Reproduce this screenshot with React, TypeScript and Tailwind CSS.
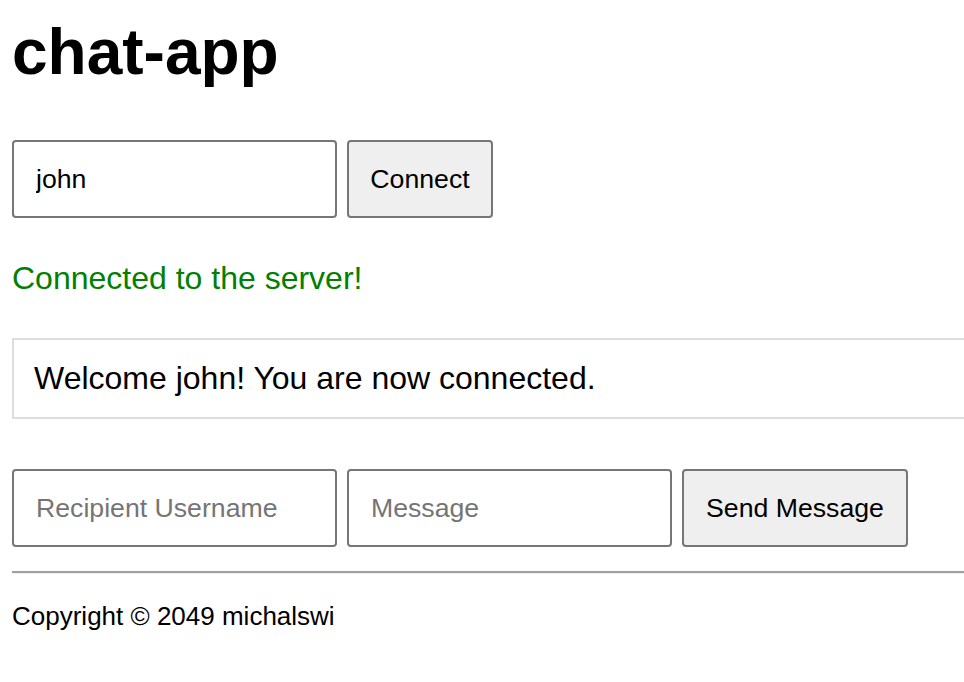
import React, { useState } from "react";

const font = { fontFamily: '"Liberation Sans", Arial, Helvetica, sans-serif' };

const App = () => {
  const [username, setUsername] = useState("john");
  const [recipient, setRecipient] = useState("");
  const [message, setMessage] = useState("");

  return (
    <div className="w-full overflow-hidden bg-white text-black" style={font}>
      <div className="px-[12px] pt-[15px] pb-[40px]">
        <h1 className="text-[64px] font-bold leading-[74px]">chat-app</h1>

        <div className="mt-[51px] flex gap-[10px]">
          <input
            className="w-[325px] h-[78px] rounded-[4px] border-2 border-[#767676] px-[22px] text-[26.67px] text-black outline-none"
            value={username}
            onChange={e => setUsername(e.target.value)}
          />
          <button className="w-[146px] h-[78px] rounded-[4px] border-2 border-[#767676] bg-[#efefef] text-[26.67px] text-black">
            Connect
          </button>
        </div>

        <p className="mt-[42px] text-[32px] leading-[37px] text-[#008000]">Connected to the server!</p>

        <div className="mt-[41px] -mr-[60px] border-2 border-[#dddddd] p-[20px] text-[32px] leading-[37px]">
          Welcome john! You are now connected.
        </div>

        <div className="mt-[50px] flex gap-[10px]">
          <input
            className="w-[325px] h-[78px] rounded-[4px] border-2 border-[#767676] px-[22px] text-[26.67px] text-black placeholder:text-[#757575] outline-none"
            placeholder="Recipient Username"
            value={recipient}
            onChange={e => setRecipient(e.target.value)}
          />
          <input
            className="w-[325px] h-[78px] rounded-[4px] border-2 border-[#767676] px-[22px] text-[26.67px] text-black placeholder:text-[#757575] outline-none"
            placeholder="Message"
            value={message}
            onChange={e => setMessage(e.target.value)}
          />
          <button className="w-[226px] h-[78px] rounded-[4px] border-2 border-[#767676] bg-[#efefef] text-[26.67px] text-black">
            Send Message
          </button>
        </div>

        <div className="mt-[24px] -mr-[60px] h-[3px] border-t-2 border-b border-t-[#a0a0a0] border-b-[#eeeeee]" />

        <p className="mt-[27px] text-[26px] leading-[30px]">Copyright © 2049 michalswi</p>
      </div>
    </div>
  );
};

export default App;
